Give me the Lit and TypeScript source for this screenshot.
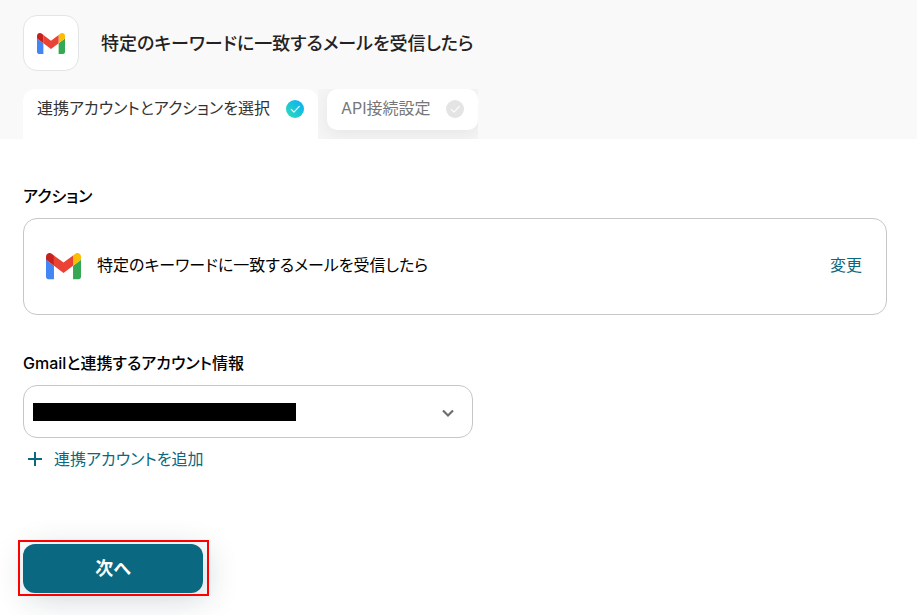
import { LitElement, html, css, svg } from "lit";
import { customElement, property } from "lit/decorators.js";

@customElement("gmail-logo")
class GmailLogo extends LitElement {
  static styles = css`
    :host { display: block; flex: none; }
    svg { display: block; width: 100%; }
  `;
  render() {
    return html`<svg viewBox="52 42 88 66" aria-hidden="true">
      <path fill="#4285f4" d="M58 108h14V74L52 59v43c0 3.32 2.69 6 6 6" />
      <path fill="#34a853" d="M120 108h14c3.32 0 6-2.69 6-6V59l-20 15" />
      <path fill="#fbbc04" d="M120 48v26l20-15v-8c0-7.42-8.47-11.65-14.4-7.2" />
      <path fill="#ea4335" d="M72 74V48l24 18 24-18v26L96 92" />
      <path fill="#c5221f" d="M52 51v8l20 15V48l-5.6-4.2c-5.94-4.45-14.4-.22-14.4 7.2" />
    </svg>`;
  }
}

@customElement("check-mark")
class CheckMark extends LitElement {
  @property({ type: Boolean }) done = false;
  static styles = css`
    :host { display: block; flex: none; width: 18px; height: 18px; }
    svg { display: block; width: 100%; }
  `;
  render() {
    return html`<svg viewBox="0 0 18 18" aria-hidden="true">
      ${svg`<defs><linearGradient id="g" x1="0" y1="1" x2="1" y2="0">
        <stop offset="0.1" stop-color="#2bd9bd" /><stop offset="0.9" stop-color="#0ab1f3" />
      </linearGradient></defs>
      <circle cx="9" cy="9" r="9" fill=${this.done ? "url(#g)" : "#e4e4e4"} />
      <path d="M5.2 9.4 8 12.2 13.3 6.4" fill="none" stroke="#fff" stroke-width="1.1" stroke-linecap="round" stroke-linejoin="round" />`}
    </svg>`;
  }
}

@customElement("app-root")
class AppRoot extends LitElement {
  static styles = css`
    :host {
      display: block;
      min-height: 100vh;
      background: #fff;
      color: #000;
      font: 400 16px/24px Inter, "Noto Sans CJK JP", sans-serif;
      font-feature-settings: "palt";
    }
    * { box-sizing: border-box; }
    button, select { font: inherit; font-feature-settings: inherit; cursor: pointer; }
    header { background: #f9f9f9; padding: 15px 24px 0 23px; }
    .title { display: flex; align-items: center; gap: 22px; }
    .badge {
      display: grid; place-items: center; flex: none;
      width: 56px; height: 56px;
      background: #fff; border: 1px solid #e4e4e4; border-radius: 14px;
    }
    .badge gmail-logo { width: 28px; }
    h1 { margin: 0; padding-top: 2px; font-size: 18px; font-weight: 500; line-height: 28px; color: #222; }
    .tabs { display: flex; margin-top: 18px; height: 50px; }
    .tab {
      display: flex; align-items: flex-start; gap: 16px;
      border: 0; background: #fff; color: #333; white-space: nowrap;
      padding: 7px 14px;
    }
    .tab check-mark { margin-top: 4px; }
    .active { border-radius: 12px 12px 0 0; }
    .next { overflow: hidden; padding-left: 9px; background: #f5f5f5; }
    .next .tab { height: 41px; color: #777; border-radius: 10px; box-shadow: 0 4px 16px #00000010; }
    main { padding: 45px 30px 22px 23px; }
    .label { display: block; margin: 0; font-size: 16px; font-weight: 500; line-height: 24px; }
    .card {
      display: flex; align-items: center; gap: 16px;
      margin: 10px 0 36px; padding: 34px 24px 34px 22px;
      border: 1px solid #c6c6c6; border-radius: 14px;
    }
    .card gmail-logo { width: 35px; }
    .card p { flex: 1; margin: 0; }
    .card p, .card a { padding-bottom: 3px; }
    a { color: #0a6981; text-decoration: none; }
    .account { position: relative; max-width: 450px; margin: 10px 0 9px; }
    select {
      display: block; appearance: none; width: 100%; height: 53px; padding: 0 40px 0 14px;
      background: #fff; border: 1px solid #c6c6c6; border-radius: 14px;
    }
    .mask { position: absolute; left: 10px; top: 18px; width: 263px; height: 18px; background: #000; pointer-events: none; }
    .chevron { position: absolute; right: 17px; top: 20px; width: 16px; height: 16px; pointer-events: none; }
    .add { display: flex; width: fit-content; align-items: center; gap: 11px; padding-left: 4px; }
    .add svg { width: 16px; height: 16px; }
    .submit { position: relative; width: 180px; margin-top: 73px; }
    .submit::after {
      content: ""; position: absolute; inset: -4px -6px -3px -5px;
      border: 2px solid #f00; pointer-events: none;
    }
    .submit button {
      display: block; width: 100%; height: 49px; border: 0; border-radius: 12px;
      background: #0a6981; color: #fff; font-size: 18px; font-weight: 700;
      box-shadow: 4px 6px 32px #0a253530;
    }
  `;

  render() {
    return html`
      <header>
        <div class="title">
          <div class="badge"><gmail-logo></gmail-logo></div>
          <h1>特定のキーワードに一致するメールを受信したら</h1>
        </div>
        <nav class="tabs">
          <button class="tab active">連携アカウントとアクションを選択<check-mark done></check-mark></button>
          <div class="next">
            <button class="tab">API接続設定<check-mark></check-mark></button>
          </div>
        </nav>
      </header>
      <main>
        <h2 class="label">アクション</h2>
        <section class="card">
          <gmail-logo></gmail-logo>
          <p>特定のキーワードに一致するメールを受信したら</p>
          <a href="#">変更</a>
        </section>
        <label class="label" for="account">Gmailと連携するアカウント情報</label>
        <div class="account">
          <select id="account"><option></option></select>
          <span class="mask"></span>
          <svg class="chevron" viewBox="0 0 16 16" aria-hidden="true">
            <path d="M3 5.5 8 10.5 13 5.5" fill="none" stroke="#6f6f6f" stroke-width="2.2" />
          </svg>
        </div>
        <a class="add" href="#">
          <svg viewBox="0 0 16 16" aria-hidden="true"><path d="M8 1v14M1 8h14" stroke="#0a6981" stroke-width="2" /></svg>連携アカウントを追加
        </a>
        <div class="submit"><button>次へ</button></div>
      </main>
    `;
  }
}
